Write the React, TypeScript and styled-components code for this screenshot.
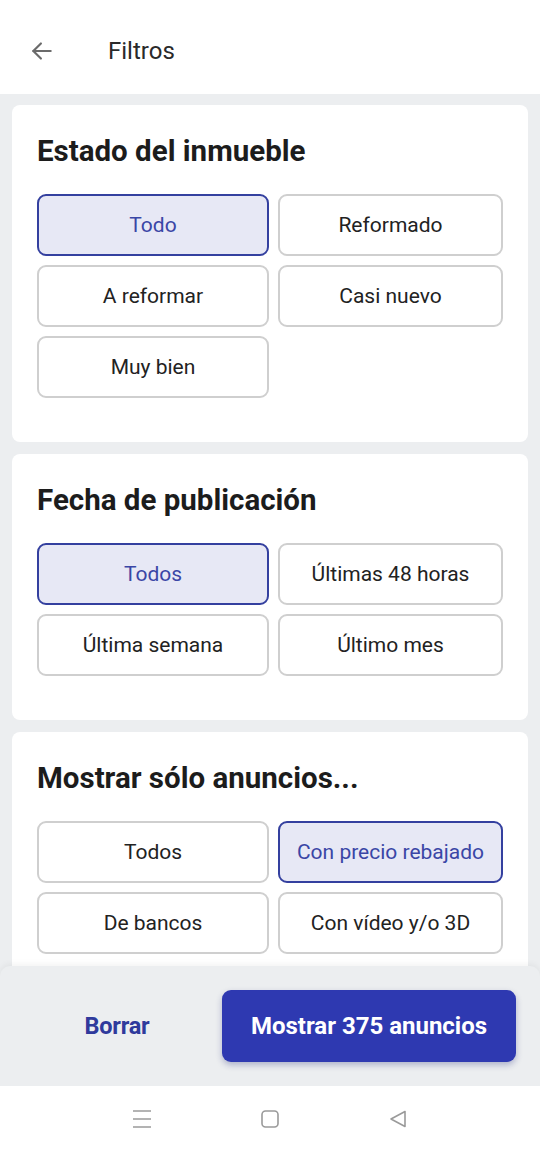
import styled, { createGlobalStyle } from "styled-components";

const GlobalStyle = createGlobalStyle`
  html, body {
    margin: 0;
    padding: 0;
    background: #ffffff;
  }
  body {
    font-family: Roboto, "Liberation Sans", sans-serif;
    -webkit-font-smoothing: antialiased;
  }
`;

const Page = styled.div`
  width: 540px;
  height: 1152px;
  display: flex;
  flex-direction: column;
  background: #eceef0;
  overflow: hidden;
`;

const Header = styled.header`
  height: 94px;
  flex-shrink: 0;
  background: #ffffff;
  display: flex;
  align-items: center;
  padding: 0 0 0 28px;
  box-sizing: border-box;
`;

const BackButton = styled.button`
  border: none;
  background: none;
  padding: 0;
  width: 28px;
  height: 28px;
  display: flex;
  align-items: center;
  justify-content: center;
  color: #6b6b6b;
  margin-right: 52px;
  margin-top: 8px;
`;

const HeaderTitle = styled.h1`
  margin: 8px 0 0;
  font-size: 24px;
  font-weight: 400;
  color: #2a2a2a;
`;

const Scroll = styled.main`
  flex: 1;
  overflow: hidden;
  padding: 11px 12px 0;
  display: flex;
  flex-direction: column;
  gap: 12px;
`;

const Card = styled.section`
  background: #ffffff;
  border-radius: 8px;
  padding: 30px 25px 44px;
  flex-shrink: 0;
`;

const CardTitle = styled.h2`
  margin: 0 0 27px;
  font-size: 29.5px;
  font-weight: 700;
  color: #1c1c1c;
  line-height: 32px;
`;

const Options = styled.div`
  display: grid;
  grid-template-columns: 232px 1fr;
  gap: 9px;
`;

const Option = styled.button<{ $active?: boolean }>`
  height: 62px;
  box-sizing: border-box;
  border-radius: 9px;
  border: 2px solid ${(p) => (p.$active ? "#34409f" : "#cfcfcf")};
  background: ${(p) => (p.$active ? "#e7e8f5" : "#ffffff")};
  color: ${(p) => (p.$active ? "#3a46a6" : "#222222")};
  font-family: Roboto, "Liberation Sans", sans-serif;
  font-size: 21px;
  font-weight: 400;
  padding: 0;
`;

const Footer = styled.footer`
  height: 120px;
  flex-shrink: 0;
  background: #eceef0;
  display: flex;
  align-items: center;
  padding: 0 24px 0 0;
  box-sizing: border-box;
  border-radius: 10px 10px 0 0;
  box-shadow: 0 -2px 6px rgba(0, 0, 0, 0.05);
`;

const ClearButton = styled.button`
  border: none;
  background: none;
  width: 222px;
  font-family: Roboto, "Liberation Sans", sans-serif;
  font-size: 23.5px;
  font-weight: 700;
  color: #2f3a9c;
  padding: 0 0 0 12px;
  letter-spacing: -0.2px;
`;

const SubmitButton = styled.button`
  flex: 1;
  height: 72px;
  border: none;
  border-radius: 9px;
  background: #2e39b1;
  color: #ffffff;
  font-family: Roboto, "Liberation Sans", sans-serif;
  font-size: 24px;
  font-weight: 700;
  box-shadow: 0 3px 6px rgba(30, 40, 120, 0.3);
`;

const NavBar = styled.nav`
  height: 66px;
  flex-shrink: 0;
  background: #ffffff;
  display: flex;
  align-items: center;
  justify-content: center;
  gap: 104px;
  color: #9a9a9a;
`;

const NavIcon = styled.span`
  width: 24px;
  height: 24px;
  display: flex;
  align-items: center;
  justify-content: center;
`;

type Section = {
  title: string;
  options: string[];
  active: string;
};

const sections: Section[] = [
  {
    title: "Estado del inmueble",
    options: ["Todo", "Reformado", "A reformar", "Casi nuevo", "Muy bien"],
    active: "Todo",
  },
  {
    title: "Fecha de publicación",
    options: ["Todos", "Últimas 48 horas", "Última semana", "Último mes"],
    active: "Todos",
  },
  {
    title: "Mostrar sólo anuncios...",
    options: ["Todos", "Con precio rebajado", "De bancos", "Con vídeo y/o 3D"],
    active: "Con precio rebajado",
  },
];

export default function App() {
  return (
    <>
      <GlobalStyle />
      <Page>
        <Header>
          <BackButton aria-label="Volver">
            <svg width="26" height="26" viewBox="0 0 24 24" fill="none" stroke="currentColor" strokeWidth="2" strokeLinecap="round" strokeLinejoin="round">
              <path d="M20 12H4" />
              <path d="M11 5l-7 7 7 7" />
            </svg>
          </BackButton>
          <HeaderTitle>Filtros</HeaderTitle>
        </Header>
        <Scroll>
          {sections.map((s) => (
            <Card key={s.title}>
              <CardTitle>{s.title}</CardTitle>
              <Options>
                {s.options.map((o) => (
                  <Option key={o} $active={o === s.active}>
                    {o}
                  </Option>
                ))}
              </Options>
            </Card>
          ))}
        </Scroll>
        <Footer>
          <ClearButton>Borrar</ClearButton>
          <SubmitButton>Mostrar 375 anuncios</SubmitButton>
        </Footer>
        <NavBar>
          <NavIcon>
            <svg width="22" height="22" viewBox="0 0 22 22" fill="none" stroke="currentColor" strokeWidth="1.6">
              <path d="M2 3h18M2 11h18M2 19h18" />
            </svg>
          </NavIcon>
          <NavIcon>
            <svg width="20" height="20" viewBox="0 0 20 20" fill="none" stroke="currentColor" strokeWidth="1.6">
              <rect x="2" y="2" width="16" height="16" rx="3.5" />
            </svg>
          </NavIcon>
          <NavIcon>
            <svg width="20" height="20" viewBox="0 0 20 20" fill="none" stroke="currentColor" strokeWidth="1.6" strokeLinejoin="round">
              <path d="M17 2.5v15L3 10z" />
            </svg>
          </NavIcon>
        </NavBar>
      </Page>
    </>
  );
}
